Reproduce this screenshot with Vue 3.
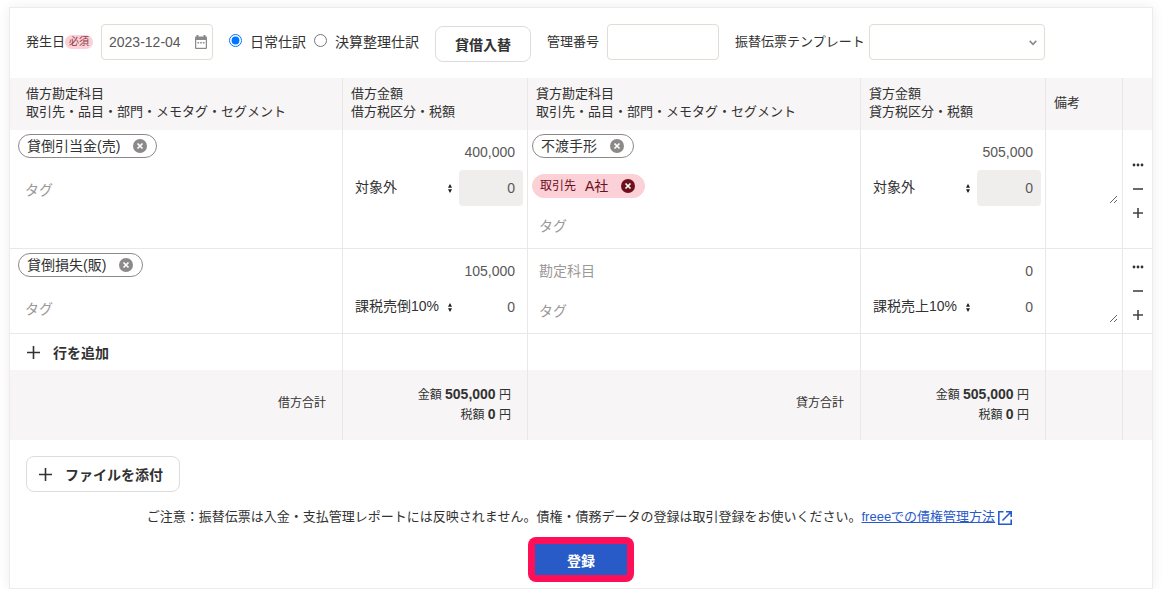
<script setup>
import { reactive, ref } from 'vue'

const issueDate = ref('2023-12-04')
const entryType = ref('daily')
const controlNo = ref('')
const template = ref('')

const rows = reactive([
  {
    debit: { account: '貸倒引当金(売)', tags: [], amount: '400,000', taxType: '対象外', tax: '0', locked: true },
    credit: {
      account: '不渡手形',
      tags: [{ kind: '取引先', name: 'A社' }],
      amount: '505,000',
      taxType: '対象外',
      tax: '0',
      locked: true
    },
    memo: ''
  },
  {
    debit: { account: '貸倒損失(販)', tags: [], amount: '105,000', taxType: '課税売倒10%', tax: '0', locked: false },
    credit: { account: '', tags: [], amount: '0', taxType: '課税売上10%', tax: '0', locked: false },
    memo: ''
  }
])

const sides = [
  { key: 'debit', label: '借方' },
  { key: 'credit', label: '貸方' }
]
</script>

<template>
  <main class="card">
    <form class="voucher" @submit.prevent>
      <div class="toolbar">
        <label class="caption" for="issue-date">発生日<span class="required">必須</span></label>
        <div class="date-box">
          <input id="issue-date" v-model="issueDate" class="field" type="text" />
          <svg class="calendar" width="12" height="14" viewBox="0 0 12 14" aria-hidden="true">
            <path d="M1.500 0h2v1.500h5V0h2v1.500H11a1 1 0 0 1 1 1V13a1 1 0 0 1-1 1H1a1 1 0 0 1-1-1V2.500a1 1 0 0 1 1-1h.5z" fill="#8c8989" />
            <path d="M1.200 5h9.600v7.800H1.200z" fill="#fff" />
            <path d="M2.500 7h1.600v1.500H2.500zM5.200 7h1.600v1.500H5.200zM7.900 7h1.600v1.500H7.900z" fill="#8c8989" />
          </svg>
        </div>
        <div class="radios">
          <label class="radio"><input v-model="entryType" type="radio" name="entry" value="daily" />日常仕訳</label>
          <label class="radio"><input v-model="entryType" type="radio" name="entry" value="closing" />決算整理仕訳</label>
        </div>
        <button class="btn swap" type="button">貸借入替</button>
        <label class="caption" for="control-no">管理番号</label>
        <input id="control-no" v-model="controlNo" class="field number-field" type="text" />
        <label class="caption template-label" for="template">振替伝票テンプレート</label>
        <div class="template-box">
          <select id="template" v-model="template" class="field">
            <option value=""></option>
          </select>
          <svg class="chevron" width="8" height="6" viewBox="0 0 8 6" aria-hidden="true">
            <path d="M.7.9 4 4.3 7.300.9" fill="none" stroke="#8c8989" stroke-width="1.6" />
          </svg>
        </div>
      </div>

      <table class="journal">
        <colgroup>
          <col />
          <col class="col-amount" />
          <col />
          <col class="col-amount" />
          <col class="col-memo" />
          <col class="col-ops" />
        </colgroup>
        <thead>
          <tr>
            <template v-for="side in sides" :key="side.key">
              <th scope="col">{{ side.label }}勘定科目<br />取引先・品目・部門・メモタグ・セグメント</th>
              <th scope="col">{{ side.label }}金額<br />{{ side.label }}税区分・税額</th>
            </template>
            <th scope="col">備考</th>
            <td></td>
          </tr>
        </thead>
        <tbody>
          <tr v-for="(row, i) in rows" :key="i" class="entry">
            <template v-for="side in sides" :key="side.key">
              <td class="account">
                <div v-if="row[side.key].account" class="account-slot">
                  <span class="chip">
                    {{ row[side.key].account }}
                    <button class="clear" type="button" :aria-label="row[side.key].account + 'を削除'">
                      <svg width="14" height="14" viewBox="0 0 14 14" aria-hidden="true">
                        <circle cx="7" cy="7" r="7" fill="#8c8989" />
                        <path d="M4.500 4.500 9.500 9.500M9.500 4.500 4.500 9.500" stroke="#fff" stroke-width="1.7" />
                      </svg>
                    </button>
                  </span>
                </div>
                <input v-else class="bare account-input" type="text" placeholder="勘定科目" :aria-label="side.label + '勘定科目'" />
                <div class="tags">
                  <span v-for="tag in row[side.key].tags" :key="tag.name" class="chip partner">
                    <small>{{ tag.kind }}</small>{{ tag.name }}
                    <button class="clear" type="button" :aria-label="tag.name + 'を削除'">
                      <svg width="14" height="14" viewBox="0 0 14 14" aria-hidden="true">
                        <circle cx="7" cy="7" r="7" fill="#6e0f1c" />
                        <path d="M4.500 4.500 9.500 9.500M9.500 4.500 4.500 9.500" stroke="#fff" stroke-width="1.7" />
                      </svg>
                    </button>
                  </span>
                  <input class="bare tag-input" type="text" placeholder="タグ" :aria-label="side.label + 'タグ'" />
                </div>
              </td>
              <td class="amount">
                <input v-model="row[side.key].amount" class="bare money" type="text" :aria-label="side.label + '金額'" />
                <div class="tax">
                  <div class="tax-type">
                    <select v-model="row[side.key].taxType" :aria-label="side.label + '税区分'">
                      <option>{{ row[side.key].taxType }}</option>
                    </select>
                    <svg class="sort" width="4" height="9" viewBox="0 0 4 9" aria-hidden="true">
                      <path d="M2 0 4 3.800H0zM2 9 0 5.200h4z" fill="#1e1e1e" />
                    </svg>
                  </div>
                  <input
                    v-model="row[side.key].tax"
                    class="bare money tax-amount"
                    type="text"
                    :disabled="row[side.key].locked"
                    :aria-label="side.label + '税額'"
                  />
                </div>
              </td>
            </template>
            <td class="memo"><textarea v-model="row.memo" aria-label="備考"></textarea></td>
            <td class="ops">
              <div class="op-list">
                <button type="button" aria-label="その他">
                  <svg width="12" height="12" viewBox="0 0 12 12" aria-hidden="true">
                    <g fill="#323232">
                      <circle cx="2" cy="6" r="1.400" />
                      <circle cx="6" cy="6" r="1.400" />
                      <circle cx="10" cy="6" r="1.400" />
                    </g>
                  </svg>
                </button>
                <button type="button" aria-label="行を削除">
                  <svg width="12" height="12" viewBox="0 0 12 12" aria-hidden="true">
                    <path d="M1 6h10" stroke="#464343" stroke-width="1.6" />
                  </svg>
                </button>
                <button type="button" aria-label="行を挿入">
                  <svg width="12" height="12" viewBox="0 0 12 12" aria-hidden="true">
                    <path d="M1 6h10M6 1v10" stroke="#464343" stroke-width="1.6" />
                  </svg>
                </button>
              </div>
            </td>
          </tr>
          <tr class="add">
            <td>
              <button class="add-row" type="button">
                <svg width="13" height="13" viewBox="0 0 13 13" aria-hidden="true">
                  <path d="M0 6.500h13M6.500 0v13" stroke="#323232" stroke-width="1.6" />
                </svg>
                行を追加
              </button>
            </td>
            <td></td>
            <td></td>
            <td></td>
            <td></td>
            <td></td>
          </tr>
        </tbody>
        <tfoot>
          <tr>
            <template v-for="side in sides" :key="side.key">
              <th scope="row">{{ side.label }}合計</th>
              <td>
                <div>金額 <b>505,000</b> 円</div>
                <div>税額 <b>0</b> 円</div>
              </td>
            </template>
            <td></td>
            <td></td>
          </tr>
        </tfoot>
      </table>

      <div class="attach">
        <button class="btn attach-btn" type="button">
          <svg width="13" height="13" viewBox="0 0 13 13" aria-hidden="true">
            <path d="M0 6.500h13M6.500 0v13" stroke="#323232" stroke-width="1.6" />
          </svg>
          ファイルを添付
        </button>
      </div>

      <p class="notice">
        <span>ご注意：振替伝票は入金・支払管理レポートには反映されません。債権・債務データの登録は取引登録をお使いください。</span>
        <a href="#">
          <span>freeeでの債権管理方法</span>
          <svg width="16" height="16" viewBox="0 0 16 16" aria-hidden="true">
            <path d="M6.500 1.800H1.800v12.400h12.400V9.500M9 1.800h5.200V7M14.200 1.800 5.500 10.500" fill="none" stroke="#285ac8" stroke-width="1.600" />
          </svg>
        </a>
      </p>

      <div class="submit-area">
        <div class="highlight"><button class="submit" type="submit">登録</button></div>
      </div>
    </form>
  </main>
</template>

<style>
body {
  margin: 0;
  background: #fff;
}
</style>

<style scoped>
.card {
  margin: 7px 14px 0 9px;
  border: 1px solid #ececec;
  background: #fff;
  box-shadow: 0 0 12px rgba(0, 0, 0, 0.07);
  color: #323232;
  font: 13px/18px "Liberation Sans", "Noto Sans CJK JP", sans-serif;
}
.card *,
.card {
  box-sizing: border-box;
}
button,
input,
select,
textarea {
  margin: 0;
  font-family: inherit;
  font-size: 14px;
  color: inherit;
}
button {
  cursor: pointer;
}
svg {
  display: block;
  flex: none;
}
.toolbar {
  display: flex;
  align-items: center;
  height: 70px;
  padding: 0 16px 2px;
}
.caption {
  display: flex;
  align-items: center;
  white-space: nowrap;
}
.required {
  height: 14px;
  padding: 0 4px;
  border-radius: 7px;
  background: #fbd0d6;
  color: #8c3a46;
  font-size: 10px;
  line-height: 14px;
}
.field {
  display: block;
  width: 100%;
  height: 36px;
  padding: 0 7px;
  border: 1px solid #e1dcd4;
  border-radius: 4px;
  background: #fff;
  color: #595757;
}
.date-box {
  position: relative;
  width: 112px;
  margin-left: 8px;
}
.calendar {
  position: absolute;
  top: 11px;
  right: 6px;
}
.radios {
  display: flex;
  gap: 8px;
  margin: 0 16px;
}
.radio {
  display: flex;
  align-items: center;
  gap: 8px;
  font-size: 14px;
  white-space: nowrap;
}
.radio input {
  width: 13px;
  height: 13px;
  margin: 0 0 3px;
}
.btn {
  height: 36px;
  border: 1px solid #dcdcdc;
  border-radius: 8px;
  background: #fff;
  font-weight: 700;
}
.swap {
  width: 96px;
  margin: 4px 16px 0 0;
  padding: 0;
}
.number-field {
  width: 112px;
  margin-left: 8px;
}
.template-label {
  margin-left: 16px;
}
.template-box {
  position: relative;
  width: 176px;
  margin-left: 4px;
}
select {
  appearance: none;
}
.chevron {
  position: absolute;
  top: 16px;
  right: 8px;
}
.journal {
  width: 100%;
  table-layout: fixed;
  border-collapse: separate;
  border-spacing: 0;
}
.col-amount {
  width: 185px;
}
.col-memo {
  width: 77px;
}
.col-ops {
  width: 29px;
}
th,
td {
  padding: 0;
  border-right: 1px solid #e9e7e7;
}
tr > :last-child {
  border-right: 0;
}
thead th {
  padding: 7px 0 9px 8px;
  font-weight: 400;
  text-align: left;
  white-space: nowrap;
}
thead th:first-child {
  padding-left: 16px;
}
thead,
tfoot {
  background: #f7f5f5;
}
.entry > td {
  padding: 4px 4px;
  border-bottom: 1px solid #e9e7e7;
  vertical-align: top;
}
.entry > .account:first-child {
  padding-left: 8px;
}
.account-slot {
  height: 36px;
}
.chip {
  display: inline-flex;
  align-items: center;
  height: 24px;
  padding: 0 9px 0 8px;
  border: 1px solid #8c8989;
  border-radius: 12px;
  font-size: 14px;
  line-height: 20px;
  vertical-align: top;
  white-space: nowrap;
}
.partner {
  margin: 2px 0 10px;
  padding-left: 7px;
  border-color: #fbd0d6;
  background: #fbd0d6;
  color: #6e0f1c;
}
.partner small {
  margin-right: 9px;
  font-size: 12px;
}
.clear {
  margin-left: 13px;
  padding: 0;
  border: 0;
  background: none;
}
.tags {
  padding-top: 2px;
}
.bare {
  display: block;
  width: 100%;
  height: 36px;
  padding: 0 8px;
  border: 0;
  border-radius: 4px;
  background: none;
  color: #595757;
}
.bare::placeholder {
  color: #9b9898;
}
.account-input {
  margin-bottom: 2px;
}
.account-input,
.tag-input {
  padding: 0 7px;
}
.money {
  text-align: right;
}
.tax {
  display: flex;
}
.tax-type {
  position: relative;
  flex: 1;
}
.tax-type select {
  width: 100%;
  height: 34px;
  padding: 0 0 0 8px;
  border: 0;
  background: none;
}
.sort {
  position: absolute;
  top: 14px;
  right: 7px;
}
.tax-amount {
  width: 64px;
}
.tax-amount:disabled {
  background: #efeeed;
}
.entry > .memo {
  padding: 0 4px 0 0;
}
textarea {
  display: block;
  width: 100%;
  height: 74px;
  padding: 8px;
  border: 0;
  background: none;
  resize: both;
}
.entry > .ops {
  padding: 0;
  vertical-align: middle;
}
.op-list {
  display: flex;
  flex-direction: column;
  align-items: center;
}
.op-list button {
  padding: 6px;
  border: 0;
  background: none;
}
.add > td {
  height: 36px;
}
.add-row {
  display: flex;
  align-items: center;
  gap: 13px;
  padding: 0 17px;
  border: 0;
  background: none;
  font-weight: 700;
}
tfoot th,
tfoot td {
  height: 70px;
  padding-right: 16px;
  font-size: 12px;
  font-weight: 400;
  line-height: 19px;
  text-align: right;
}
tfoot th {
  padding-bottom: 4px;
}
tfoot b {
  font-size: 14px;
}
.attach {
  padding: 16px;
}
.attach-btn {
  display: flex;
  align-items: center;
  gap: 13px;
  padding: 0 16px 0 12px;
}
.notice {
  display: flex;
  align-items: center;
  justify-content: center;
  margin: 0;
  padding-right: 2px;
  white-space: nowrap;
}
.notice a {
  display: flex;
  align-items: flex-end;
  gap: 2px;
  color: #285ac8;
}
.submit-area {
  display: flex;
  justify-content: center;
  padding: 11px 0 6px;
}
.highlight {
  padding: 7px;
  border-radius: 8px;
  background: #ff0f57;
}
.submit {
  display: block;
  width: 92px;
  height: 31px;
  padding: 0;
  border: 0;
  background: #285ac8;
  color: #fff;
  font-weight: 700;
}
</style>
